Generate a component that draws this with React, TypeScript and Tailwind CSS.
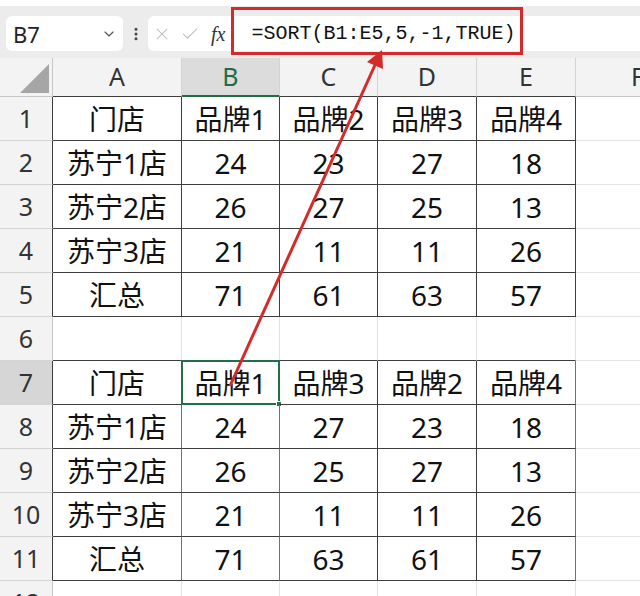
import { ChevronDown, X, Check, EllipsisVertical } from "lucide-react"

const cols = ["A", "B", "C", "D", "E", "F"]
const widths = ["w-[129px]", "w-[98px]", "w-[98px]", "w-[99px]", "w-[99px]", "w-[124px]"]

const data: Record<number, string[]> = {
  1: ["门店", "品牌1", "品牌2", "品牌3", "品牌4"],
  2: ["苏宁1店", "24", "23", "27", "18"],
  3: ["苏宁2店", "26", "27", "25", "13"],
  4: ["苏宁3店", "21", "11", "11", "26"],
  5: ["汇总", "71", "61", "63", "57"],
  7: ["门店", "品牌1", "品牌3", "品牌2", "品牌4"],
  8: ["苏宁1店", "24", "27", "23", "18"],
  9: ["苏宁2店", "26", "25", "27", "13"],
  10: ["苏宁3店", "21", "11", "11", "26"],
  11: ["汇总", "71", "63", "61", "57"],
}

const inT = (r: number, c: number) => c >= 0 && c <= 4 && ((r >= 1 && r <= 5) || (r >= 7 && r <= 11))

function rightCls(r: number, c: number) {
  if (r >= 7 && r <= 11 && (c === 0 || c === 4 || c === 1)) return "border-r-[#5d7690]"
  if (inT(r, c) || inT(r, c + 1)) return "border-r-[#3d3d3d]"
  return "border-r-[#e2e2e2]"
}

function bottomCls(r: number, c: number) {
  if (inT(r, c) || inT(r + 1, c)) return "border-b-[#3d3d3d]"
  return "border-b-[#e2e2e2]"
}

const font = "font-['Noto_Sans','Noto_Sans_CJK_SC',sans-serif]"

export default function App() {
  const rows = Array.from({ length: 12 }, (_, i) => i + 1)

  return (
    <div className={`relative w-[640px] h-[596px] overflow-hidden bg-white ${font}`}>
      {/* toolbar */}
      <div className="h-[6px] bg-white" />
      <div className="h-[52px] bg-[#ececec] flex items-start pt-[10px]">
        <div className="ml-[6px] w-[117px] h-[35px] rounded-md bg-white flex items-center justify-between pl-[7px] pr-[6px]">
          <span className="text-[22px] text-[#222] leading-none">B7</span>
          <ChevronDown className="w-4 h-4 text-[#555]" strokeWidth={1.75} />
        </div>
        <div className="w-[25px] h-[35px] flex items-center justify-center">
          <EllipsisVertical className="w-4 h-4 text-[#444]" strokeWidth={2.5} />
        </div>
        <div className="flex-1 h-[35px] rounded-l-md bg-white flex items-center">
          <X className="ml-[4px] w-[20px] h-[20px] text-[#b5b5b5]" strokeWidth={1.25} />
          <Check className="ml-[8px] w-[20px] h-[20px] text-[#b5b5b5]" strokeWidth={1.25} />
          <span className="ml-[11px] font-['Liberation_Serif',serif] italic text-[20px] text-[#333] leading-none">fx</span>
          <span className="ml-[26px] font-['Liberation_Mono',monospace] text-[20px] text-[#111] leading-none">=SORT(B1:E5,5,-1,TRUE)</span>
        </div>
      </div>

      {/* column headers */}
      <div className="flex h-[39px] bg-[#f3f3f3]">
        <div className="w-[53px] shrink-0 border-r border-r-[#c6c6c6] border-b border-b-[#c6c6c6] relative">
          <svg className="absolute left-0 top-0" width="53" height="39">
            <polygon points="20,35 49,35 49,6" fill="#a6a6a6" />
          </svg>
        </div>
        {cols.map((c, i) => (
          <div
            key={c}
            className={`${widths[i]} shrink-0 flex items-center justify-center text-[25px] border-r border-r-[#d4d4d4] ${
              c === "B" ? "bg-[#dcdcdc] text-[#1f6e43] border-b-2 border-b-[#1f6e43]" : `text-[#333] border-b ${inT(1, i) ? "border-b-[#3d3d3d]" : "border-b-[#c6c6c6]"}`
            }`}
          >
            {c}
          </div>
        ))}
      </div>

      {/* rows */}
      {rows.map((r) => (
        <div key={r} className="flex h-[44px]">
          <div
            className={`w-[53px] shrink-0 flex items-center justify-center text-[25px] text-[#333] border-b border-b-[#d4d4d4] border-r ${
              inT(r, 0) ? "border-r-[#3d3d3d]" : "border-r-[#c6c6c6]"
            } ${r === 7 ? "bg-[#d6d6d6]" : "bg-[#f3f3f3]"}`}
          >
            {r}
          </div>
          {cols.map((c, i) => (
            <div
              key={c}
              className={`${widths[i]} shrink-0 relative flex items-center justify-center text-[28px] text-[#111] border-r border-b ${rightCls(r, i)} ${bottomCls(r, i)}`}
            >
              {data[r]?.[i] ?? ""}
              {r === 7 && c === "B" && (
                <div className="absolute -left-px -top-px -right-px -bottom-px border-2 border-[#21704a]">
                  <div className="absolute -right-[4px] -bottom-[4px] w-[6px] h-[6px] bg-[#21704a] border border-white" />
                </div>
              )}
            </div>
          ))}
        </div>
      ))}

      {/* annotation */}
      <div className="absolute left-[231px] top-[7px] w-[292px] h-[48px] border-[3px] border-[#d42a2a]" />
      <svg className="absolute left-0 top-0 pointer-events-none" width="640" height="596">
        <line x1="230" y1="386" x2="375" y2="65" stroke="#d42a2a" strokeWidth="3" />
        <polygon points="382,50 383,69 367,62" fill="#d42a2a" />
      </svg>
    </div>
  )
}
